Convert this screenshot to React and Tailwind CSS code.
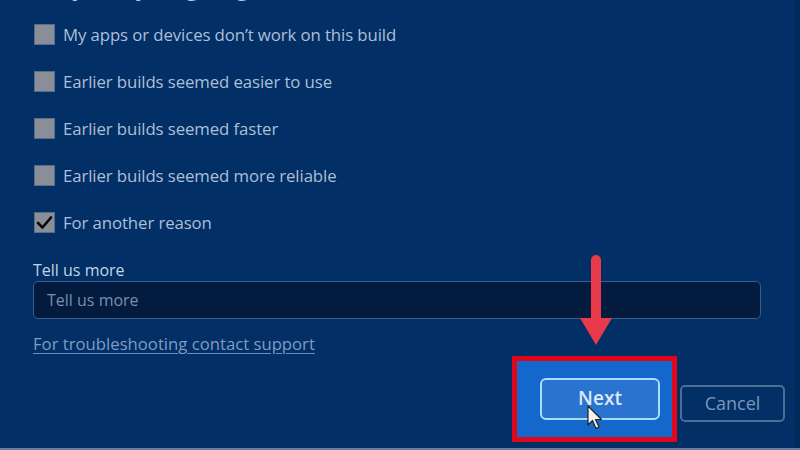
import React from "react";

const items = [
  { label: "My apps or devices don\u2019t work on this build", checked: false },
  { label: "Earlier builds seemed easier to use", checked: false },
  { label: "Earlier builds seemed faster", checked: false },
  { label: "Earlier builds seemed more reliable", checked: false },
  { label: "For another reason", checked: true },
];

function Box({ checked }) {
  return (
    <div className="w-[21px] h-[21px] bg-[#8a8e98] border border-[#5c6c84] flex items-center justify-center shrink-0">
      {checked && (
        <svg width="17" height="15" viewBox="0 0 17 15">
          <path d="M2 8 L6.5 12.5 L15 2.5" fill="none" stroke="#050505" strokeWidth="2.6" strokeLinecap="round" strokeLinejoin="round" />
        </svg>
      )}
    </div>
  );
}

export default function App() {
  return (
    <div
      className="w-[800px] h-[450px] bg-[#012f66] overflow-hidden relative flex flex-col"
      style={{ fontFamily: '"Open Sans", "Noto Sans", sans-serif' }}
    >
      <div className="flex-1 flex flex-col pl-[34px] pr-[39px]">
        <div className="mt-[-32px] h-[34px] text-[25px] leading-[34px] text-[#b9c9de]">
          Why are you going back?
        </div>
        <div className="flex flex-col mt-[9px]">
          {items.map((it) => (
            <div key={it.label} className="h-[47px] flex items-center gap-[8px]">
              <Box checked={it.checked} />
              <span className="text-[16.8px] text-[#aebfd6] tracking-[-0.1px]">{it.label}</span>
            </div>
          ))}
        </div>
        <div className="mt-[14px] text-[16px] leading-[20px] text-[#c6d3e4] ml-[-1px]">Tell us more</div>
        <div className="mt-[1px] ml-[-1px] h-[38px] rounded-[5px] bg-[#021b3e] border border-[#3d5c87] flex items-center px-[13px] text-[16px] text-[#7a8fad]">
          Tell us more
        </div>
        <div className="mt-[12px] ml-[-1px] text-[16.7px] text-[#7f9cc4] underline underline-offset-[3px] decoration-[#6f8db7]">
          For troubleshooting contact support
        </div>
        <div className="flex justify-end items-start mt-[0px] mr-[-24px]">
          <div className="w-[165px] h-[86px] bg-[#e0061c] p-[5px]">
            <div className="w-full h-full bg-[#1468cc] flex items-center justify-center">
              <div className="w-[120px] h-[42px] ml-[11px] mt-[-1px] rounded-[6px] border-2 border-[#a8dcf8] bg-[#2a74cf] flex items-center justify-center text-[19px] font-semibold text-[#dbe8f6] relative">
                Next
                <svg className="absolute left-[44px] top-[25px]" width="18" height="26" viewBox="0 0 18 26">
                  <path d="M2 1 L2 20 L6.5 15.5 L10 23.5 L13 22 L9.5 14.5 L15.5 14.5 Z" fill="#f2f2f2" stroke="#222" strokeWidth="1.2" strokeLinejoin="round" />
                </svg>
              </div>
            </div>
          </div>
          <div className="ml-[3px] mt-[29px] w-[105px] h-[37px] rounded-[5px] border-2 border-[#4b6d96] flex items-center justify-center text-[18px] text-[#7c96b8]">
            Cancel
          </div>
        </div>
      </div>
      <div className="h-[2px] bg-[#6a7f9c]" />
      <div className="absolute right-0 top-0 w-[5px] h-[448px] bg-[#002a5c]" />
      <svg className="absolute left-[578px] top-[254px]" width="36" height="94" viewBox="0 0 36 94">
        <line x1="18" y1="6" x2="18" y2="66" stroke="#e83a4a" strokeWidth="10" strokeLinecap="round" />
        <path d="M2 64 L34 64 L18 91 Z" fill="#e83a4a" />
      </svg>
    </div>
  );
}
